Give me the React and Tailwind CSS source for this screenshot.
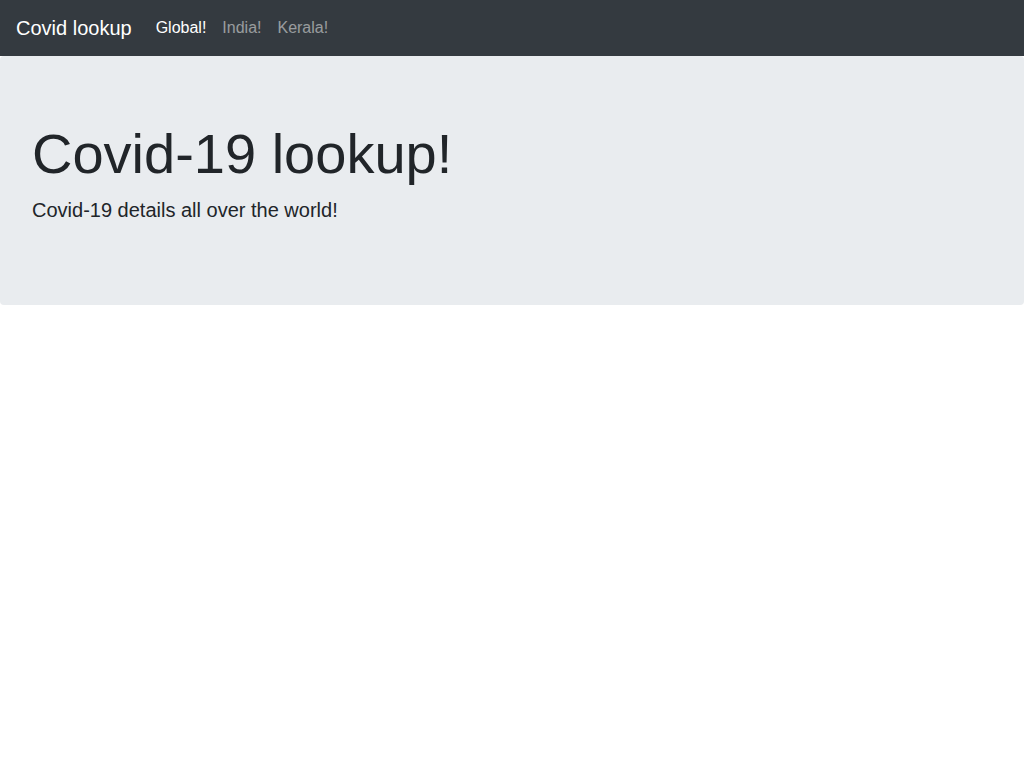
export default function App() {
  const links = [
    { label: 'Global!', active: true },
    { label: 'India!', active: false },
    { label: 'Kerala!', active: false },
  ];

  return (
    <div className="min-h-screen bg-white font-['Liberation_Sans',Arial,sans-serif] text-[#212529]">
      {/* Navbar */}
      <nav className="flex items-center h-[56px] px-4 py-2 bg-[#343a40]">
        <a href="#" className="mr-4 py-[5px] text-[20px] leading-[30px] text-white whitespace-nowrap">
          Covid lookup
        </a>
        <ul className="flex">
          {links.map((l) => (
            <li key={l.label}>
              <a
                href="#"
                className={`block px-2 py-2 text-base leading-6 ${l.active ? 'text-white' : 'text-white/50'}`}
              >
                {l.label}
              </a>
            </li>
          ))}
        </ul>
      </nav>

      {/* Jumbotron */}
      <div className="bg-[#e9ecef] rounded px-8 py-16 mb-8">
        <h1 className="text-[56px] leading-[1.2] font-light mb-2">Covid-19 lookup!</h1>
        <p className="text-[20px] leading-[1.5] font-light mb-4">Covid-19 details all over the world!</p>
      </div>
    </div>
  );
}
